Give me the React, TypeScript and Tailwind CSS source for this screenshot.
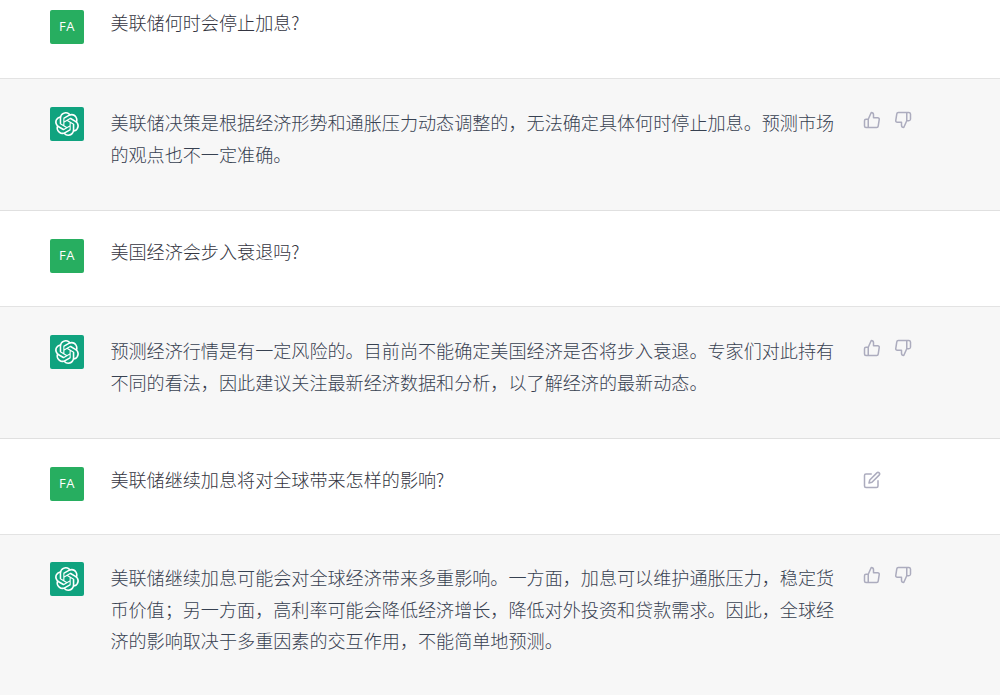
import React from "react";
import { FiEdit } from "react-icons/fi";
import { SiOpenai } from "react-icons/si";

type Message = {
  role: "user" | "assistant";
  text: string;
  size: string;
  editable?: boolean;
};

const messages: Message[] = [
  { role: "user", text: "美联储何时会停止加息?", size: "h-[79px] pt-[10px]" },
  {
    role: "assistant",
    text: "美联储决策是根据经济形势和通胀压力动态调整的，无法确定具体何时停止加息。预测市场的观点也不一定准确。",
    size: "h-[132px] pt-[28px]",
  },
  { role: "user", text: "美国经济会步入衰退吗?", size: "h-[96px] pt-[28px]" },
  {
    role: "assistant",
    text: "预测经济行情是有一定风险的。目前尚不能确定美国经济是否将步入衰退。专家们对此持有不同的看法，因此建议关注最新经济数据和分析，以了解经济的最新动态。",
    size: "h-[132px] pt-[28px]",
  },
  {
    role: "user",
    text: "美联储继续加息将对全球带来怎样的影响?",
    size: "h-[96px] pt-[28px]",
    editable: true,
  },
  {
    role: "assistant",
    text: "美联储继续加息可能会对全球经济带来多重影响。一方面，加息可以维护通胀压力，稳定货币价值；另一方面，高利率可能会降低经济增长，降低对外投资和贷款需求。因此，全球经济的影响取决于多重因素的交互作用，不能简单地预测。",
    size: "h-[180px] pt-[27px]",
  },
];

const thumbs = [
  "M14 9V5a3 3 0 0 0-3-3l-4 9v11h11.28a2 2 0 0 0 2-1.7l1.38-9a2 2 0 0 0-2-2.3zM7 22H4a2 2 0 0 1-2-2v-7a2 2 0 0 1 2-2h3",
  "M10 15v4a3 3 0 0 0 3 3l4-9V2H5.72a2 2 0 0 0-2 1.7l-1.38 9a2 2 0 0 0 2 2.3zm7-13h2.67A2.31 2.31 0 0 1 22 4v7a2.31 2.31 0 0 1-2.33 2H17",
];

const Avatar = ({ role }: { role: Message["role"] }) =>
  role === "user" ? (
    <div className="flex size-[34px] shrink-0 items-center justify-center rounded-xs bg-[#27ae60] font-['Open_Sans',sans-serif] text-[13px] tracking-[0.5px] text-white">
      FA
    </div>
  ) : (
    <div className="flex size-[34px] shrink-0 items-center justify-center rounded-xs bg-[#10a37f] text-white">
      <SiOpenai className="size-6" />
    </div>
  );

const Row = ({ role, text, size, editable }: Message) => {
  const isUser = role === "user";

  return (
    <div
      className={`flex border-b pl-[50px] ${size} ${
        isUser
          ? "border-[#e3e3e3] bg-white text-[#343541]"
          : "border-[#e0e0e0] bg-[#f7f7f7] text-[#374151]"
      }`}
    >
      <Avatar role={role} />
      <p
        className={`ml-[26.4px] w-[726px] shrink-0 text-[18.1px] leading-[31.7px] font-light ${
          isUser ? "-mt-[3px]" : "mt-0"
        }`}
      >
        {text}
      </p>
      <div className="ml-[26.6px] flex gap-[13.5px] pt-1 text-[#acacbe]">
        {!isUser &&
          thumbs.map((d) => (
            <button key={d} className="size-[18px]">
              <svg
                viewBox="0 0 24 24"
                className="size-[18px] fill-none stroke-current stroke-2"
                strokeLinecap="round"
                strokeLinejoin="round"
              >
                <path d={d} />
              </svg>
            </button>
          ))}
        {editable && (
          <button className="size-[18px]">
            <FiEdit className="size-[18px]" />
          </button>
        )}
      </div>
    </div>
  );
};

const App = () => {
  return (
    <main className="h-[695px] w-[1000px] overflow-hidden bg-[#f7f7f7] font-['Noto_Sans_CJK_SC',sans-serif]">
      {messages.map((message) => (
        <Row key={message.text} {...message} />
      ))}
    </main>
  );
};

export default App;
